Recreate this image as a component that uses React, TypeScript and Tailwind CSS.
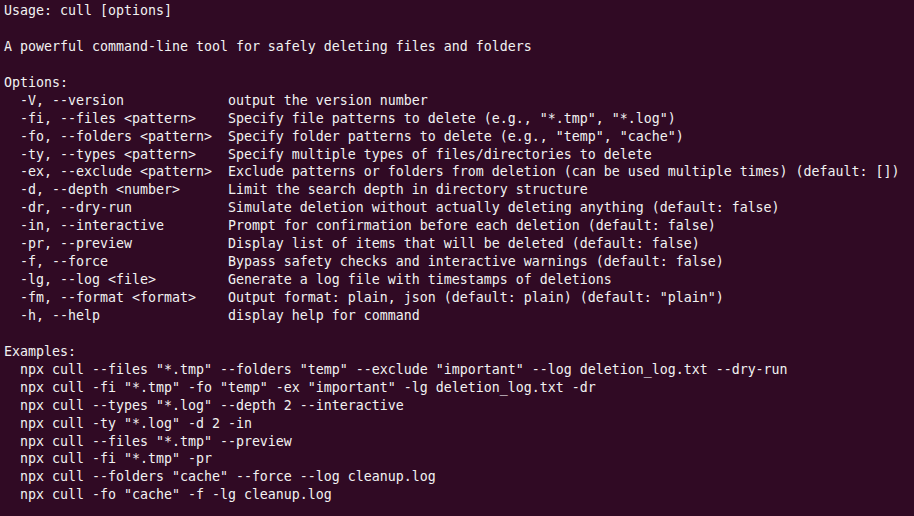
const lines = [
  "Usage: cull [options]",
  "",
  "A powerful command-line tool for safely deleting files and folders",
  "",
  "Options:",
  "  -V, --version             output the version number",
  '  -fi, --files <pattern>    Specify file patterns to delete (e.g., "*.tmp", "*.log")',
  '  -fo, --folders <pattern>  Specify folder patterns to delete (e.g., "temp", "cache")',
  "  -ty, --types <pattern>    Specify multiple types of files/directories to delete",
  "  -ex, --exclude <pattern>  Exclude patterns or folders from deletion (can be used multiple times) (default: [])",
  "  -d, --depth <number>      Limit the search depth in directory structure",
  "  -dr, --dry-run            Simulate deletion without actually deleting anything (default: false)",
  "  -in, --interactive        Prompt for confirmation before each deletion (default: false)",
  "  -pr, --preview            Display list of items that will be deleted (default: false)",
  "  -f, --force               Bypass safety checks and interactive warnings (default: false)",
  "  -lg, --log <file>         Generate a log file with timestamps of deletions",
  '  -fm, --format <format>    Output format: plain, json (default: plain) (default: "plain")',
  "  -h, --help                display help for command",
  "",
  "Examples:",
  '  npx cull --files "*.tmp" --folders "temp" --exclude "important" --log deletion_log.txt --dry-run',
  '  npx cull -fi "*.tmp" -fo "temp" -ex "important" -lg deletion_log.txt -dr',
  '  npx cull --types "*.log" --depth 2 --interactive',
  '  npx cull -ty "*.log" -d 2 -in',
  '  npx cull --files "*.tmp" --preview',
  '  npx cull -fi "*.tmp" -pr',
  '  npx cull --folders "cache" --force --log cleanup.log',
  '  npx cull -fo "cache" -f -lg cleanup.log',
];

export default function App() {
  return (
    <div className="h-[516px] w-[914px] overflow-hidden bg-[#300a24] px-1 pt-[2px]">
      <pre className="whitespace-pre font-['DejaVu_Sans_Mono',monospace] text-[13.29px] leading-[17.93px] text-[#f2f2f2]">
        {lines.join("\n")}
      </pre>
    </div>
  );
}
